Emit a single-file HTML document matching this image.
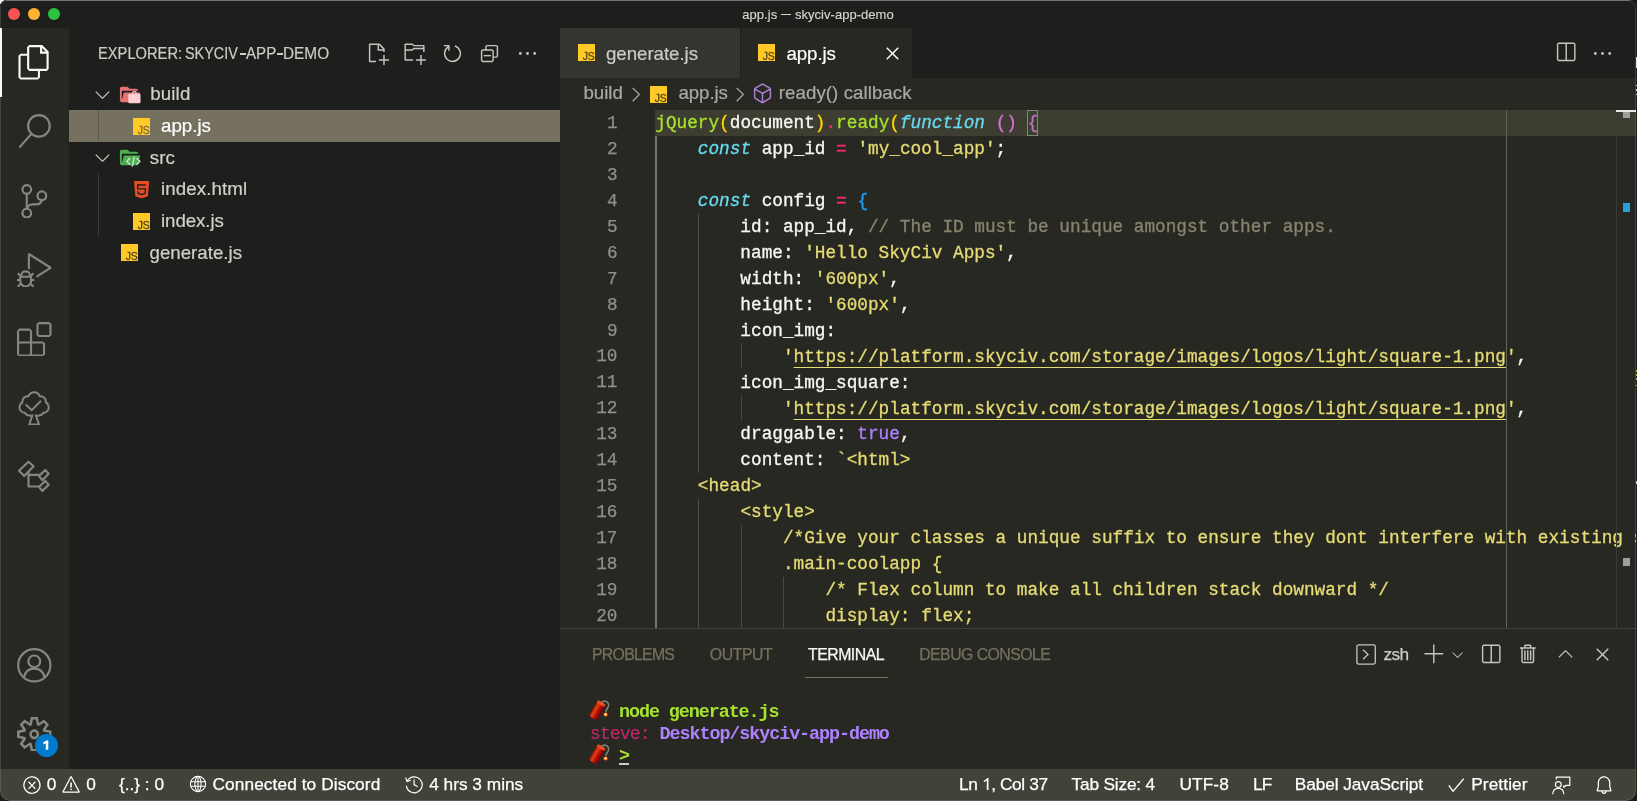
<!DOCTYPE html>
<html>
<head>
<meta charset="utf-8">
<title>app.js — skyciv-app-demo</title>
<style>
*{box-sizing:border-box;margin:0;padding:0}
html,body{width:1637px;height:801px;overflow:hidden;background:#1b1b1a}
body{font-family:"Liberation Sans",sans-serif;color:#ccc;position:relative}
.abs{position:absolute}
#win{will-change:transform;position:absolute;left:0;top:0;width:1636px;height:801px;overflow:hidden;background:#1e1f1c;border-radius:7px 8px 10px 10px}
/* title bar */
#titlebar{left:0;top:0;width:1637px;height:28px;background:#1e1f1c}
#topline{left:0;top:0;width:1637px;height:1px;background:#5c5c5a}
.tl{position:absolute;top:8px;width:12px;height:12px;border-radius:50%}
#title{left:0;width:1636px;top:7px;text-align:center;font-size:13px;color:#d4d4d0;line-height:15px;letter-spacing:.04px;-webkit-text-stroke:.15px}
/* activity bar */
#act{left:0;top:28px;width:69px;height:742px;background:#272822}
#actind{left:0;top:28px;width:2px;height:69px;background:#f8f8f2}
/* sidebar */
#side{left:69px;top:28px;width:491px;height:742px;background:#1e1f1c}
.row{position:absolute;left:69px;width:491px;height:31.7px}
.lbl{position:absolute;font-size:18.720px;line-height:22px;color:#d0d0cc;white-space:pre;-webkit-text-stroke:.2px}
.jsi{width:17.300px;height:17.300px;background:#ffca28;overflow:hidden}
.jsi span{position:absolute;right:.7px;bottom:-.4px;font-size:10.400px;line-height:11px;font-weight:normal;color:#55440f;-webkit-text-stroke:.3px #55440f;letter-spacing:-.15px;font-family:"Liberation Sans",sans-serif}
/* editor */
#tabs{left:560px;top:28px;width:1077px;height:50.400px;background:#1e1f1c}
#tab1{left:560px;top:28px;width:180px;height:50.4px;background:#34352f}
#tab2{left:741.200px;top:28px;width:171px;height:50.4px;background:#272822}
#crumbs{left:560px;top:78.4px;width:1077px;height:31.7px;background:#272822}
#editor{left:560px;top:110.100px;width:1077px;height:517.900px;background:#272822;overflow:hidden}
#curline{left:95px;top:0;width:982px;height:25.9px;background:#3e3d32}
.ln{position:absolute;left:0;width:57.500px;text-align:right;font-family:"Liberation Mono",monospace;font-size:17.720px;line-height:25.920px;height:25.920px;color:#90908a;white-space:pre;padding-top:1.100px;-webkit-text-stroke:.25px}
.cl{position:absolute;left:95.300px;font-family:"Liberation Mono",monospace;font-size:17.724px;line-height:25.920px;height:25.920px;color:#f8f8f2;white-space:pre;padding-top:1.300px;-webkit-text-stroke:.3px}
.g{color:#a6e22e}.y{color:#e6db74}.b{color:#66d9ef;font-style:italic}.p{color:#f92672}.c{color:#88846f}.v{color:#ae81ff}
.b1{color:#ffd700}.b2{color:#da70d6}.b3{color:#179fff}
.u{text-decoration:underline;text-decoration-thickness:1.400px;text-underline-offset:5.200px;text-decoration-skip-ink:none}
.ig{position:absolute;width:1.300px;background:#464741}
/* panel */
#panel{left:560px;top:628px;width:1077px;height:142px;background:#272822;border-top:1px solid #414339}
.pt{position:absolute;font-size:15.840px;line-height:20px;color:#75715e;white-space:pre;top:16px;-webkit-text-stroke:.25px}
.term{position:absolute;font-family:"Liberation Mono",monospace;font-size:18.400px;letter-spacing:-1.070px;line-height:22px;white-space:pre;font-weight:bold}
/* status */
#status{left:0;top:769.3px;width:1637px;height:31.7px;background:#414339}
.st{position:absolute;top:773.400px;font-size:17.280px;line-height:22px;color:#fff;white-space:pre;-webkit-text-stroke:.25px #fff}
</style>
</head>
<body>
<div class="abs" style="left:0;top:0;width:4px;height:4px;background:#f0f0f0"></div>
<!--EDGE--><div class="abs" style="left:1636px;top:57px;width:1px;height:11px;background:#dcdcdc"></div><div class="abs" style="left:1636px;top:85px;width:1px;height:1.400px;background:#cfcfcf"></div><div class="abs" style="left:1636px;top:89.200px;width:1px;height:1.500px;background:#cfcfcf"></div><div class="abs" style="left:1636px;top:93.600px;width:1px;height:1.400px;background:#cfcfcf"></div><div class="abs" style="left:1636px;top:370px;width:1px;height:2px;background:#b5a644"></div><div class="abs" style="left:1636px;top:374px;width:1px;height:2px;background:#b5a644"></div><div class="abs" style="left:1636px;top:378px;width:1px;height:1.500px;background:#b5a644"></div><div class="abs" style="left:1636px;top:385px;width:1px;height:1px;background:#b5a644"></div><div class="abs" style="left:1636px;top:481px;width:1px;height:3px;background:#cfcfcf"></div><!--/EDGE-->
<div id="win">
<!-- TITLE BAR -->
<div id="titlebar" class="abs"></div>
<div id="topline" class="abs"></div>
<div class="tl" style="left:8px;background:#fd5252"></div>
<div class="tl" style="left:28px;background:#fdb232"></div>
<div class="tl" style="left:48px;background:#2bc440"></div>
<div id="title" class="abs">app.js <span style="display:inline-block;width:10.400px;height:1.200px;background:#d4d4d0;vertical-align:middle;margin:0 0 1.500px 0"></span> skyciv-app-demo</div>

<!-- ACTIVITY BAR -->
<div id="act" class="abs"></div>
<div id="actind" class="abs"></div>
<!--ACT-ICONS-->
<svg class="abs" style="left:17.2px;top:45.3px" width="34.56" height="34.56" viewBox="0 0 24 24" fill="#f8f8f2"><path d="M17.5 0h-9L7 1.5V6H2.5L1 7.5v15.07L2.5 24h12.07L16 22.57V18h4.7l1.3-1.43V4.5L17.5 0zm0 2.12l2.38 2.38H17.5V2.12zm-3 20.38h-12v-15H7v9.07L8.5 18h6v4.5zm6-6h-12v-15H16V6h4.5v10.5z"/></svg>
<svg class="abs" style="left:17.2px;top:114.4px" width="34.56" height="34.56" viewBox="0 0 24 24" fill="#85867f"><path d="M15.25 0a8.25 8.25 0 0 0-6.18 13.72L1 22.88l1.12 1 8.05-9.12A8.251 8.251 0 1 0 15.25.01V0zm0 15a6.75 6.75 0 1 1 0-13.5 6.75 6.75 0 0 1 0 13.5z"/></svg>
<svg class="abs" style="left:17.2px;top:183.5px" width="34.56" height="34.56" viewBox="0 0 24 24" fill="#85867f"><path d="M21.007 8.222A3.738 3.738 0 0 0 15.045 5.2a3.737 3.737 0 0 0 1.156 6.583 2.988 2.988 0 0 1-2.668 1.67h-2.99a4.456 4.456 0 0 0-2.989 1.165V7.4a3.737 3.737 0 1 0-1.494 0v9.117a3.776 3.776 0 1 0 1.816.099 2.99 2.99 0 0 1 2.668-1.667h2.99a4.484 4.484 0 0 0 4.223-3.039 3.736 3.736 0 0 0 3.25-3.687zM4.565 3.738a2.242 2.242 0 1 1 4.484 0 2.242 2.242 0 0 1-4.484 0zm4.484 16.441a2.242 2.242 0 1 1-4.484 0 2.242 2.242 0 0 1 4.484 0zm8.221-9.715a2.242 2.242 0 1 1 0-4.485 2.242 2.242 0 0 1 0 4.485z"/></svg>
<svg class="abs" style="left:17.2px;top:252.6px" width="34.56" height="34.56" viewBox="0 0 24 24" fill="#85867f"><path d="M10.94 13.5l-1.32 1.32a3.73 3.73 0 0 0-7.24 0L1.06 13.5 0 14.56l1.72 1.72-.22.22V18H0v1.5h1.5v.08c.077.489.214.966.41 1.42L0 22.94 1.06 24l1.65-1.65A4.308 4.308 0 0 0 6 24a4.31 4.31 0 0 0 3.29-1.65L10.94 24 12 22.94 10.09 21c.198-.464.336-.951.41-1.45v-.1H12V18h-1.5v-1.5l-.22-.22L12 14.56l-1.06-1.06zM6 13.5a2.25 2.25 0 0 1 2.25 2.25h-4.5A2.25 2.25 0 0 1 6 13.5zm3 6a3.33 3.33 0 0 1-3 3 3.33 3.33 0 0 1-3-3v-2.25h6v2.25zm14.76-9.9v1.26L13.5 17.37V15.6l8.5-5.37L9 2v9.46a5.07 5.07 0 0 0-1.5-.72V.63L8.64 0l15.12 9.6z"/></svg>
<svg class="abs" style="left:17.2px;top:321.7px" width="34.56" height="34.56" viewBox="0 0 24 24" fill="#85867f"><path d="M13.5 1.5L15 0h7.5L24 1.5V9l-1.5 1.5H15L13.5 9V1.5zm1.5 0V9h7.5V1.5H15zM0 15V6l1.5-1.5H9L10.5 6v7.5H18l1.5 1.5v7.5L18 24H1.5L0 22.5V15zm9-1.5V6H1.5v7.5H9zM9 15H1.5v7.5H9V15zm1.5 7.5H18V15h-7.5v7.5z"/></svg>
<!-- tree icon -->
<svg class="abs" style="left:17.200px;top:390.800px" width="34.560" height="34.560" viewBox="0 0 24 24" fill="none" stroke="#85867f" stroke-width="1.400" stroke-linejoin="round" stroke-linecap="round"><path d="M13.100 16.900C15 17.600 17.500 16.600 18.300 15.200 21 15 22.600 12.600 21.900 10.400 21.600 9 20.800 8.200 20 7.800 20.300 5.200 18.300 3.400 15.900 3.700 15.200 1.900 13.600.8 11.900.8 10.200.8 8.600 1.900 7.900 3.700 5.500 3.400 3.500 5.200 3.800 7.800 3 8.200 2.200 9 1.900 10.400 1.200 12.600 2.800 15 5.500 15.200 6.300 16.600 8.800 17.600 10.700 16.900L8.500 23.300H15.300Z"/><path d="M6.400 9.700l3.900 3.600 6-6.200"/></svg>
<!-- graph icon -->
<svg class="abs" style="left:17.200px;top:459.900px" width="34.560" height="34.560" viewBox="0 0 24 24" fill="none" stroke="#85867f" stroke-width="1.500" stroke-linejoin="round"><path d="M8 1.250l3.530 3.130-6.460 6.800L1.400 7.500z"/><path d="M19.650 7l2.360 2.580-4.440 4.450-2.290-2.850z"/><path d="M19.650 14.500l2.360 2.600-4.440 4.400-2.290-2.800z"/><path d="M8 8.500v9.900h8M8 10.350h8"/></svg>
<!-- account -->
<svg class="abs" style="left:17.2px;top:648.300px" width="34.56" height="34.56" viewBox="0 0 24 24" fill="none" stroke="#85867f" stroke-width="1.5"><circle cx="12" cy="12" r="11.200"/><circle cx="12" cy="9.300" r="4.100"/><path d="M4.800 20.300c.9-3.800 3.700-6 7.200-6s6.300 2.200 7.200 6"/></svg>
<!-- gear -->
<svg class="abs" style="left:17.200px;top:716.800px" width="34.56" height="34.56" viewBox="0 0 24 24" fill="#85867f"><path fill-rule="evenodd" d="M19.850 8.750l4.150.83v4.840l-4.150.83 2.350 3.520-3.430 3.430-3.520-2.350-.83 4.150H9.580l-.83-4.150-3.520 2.350-3.430-3.430 2.350-3.520L0 14.420V9.580l4.150-.83L1.800 5.230 5.230 1.800l3.520 2.350L9.580 0h4.840l.83 4.150 3.520-2.350 3.430 3.430-2.350 3.520zm-1.570 5.070l4-.81v-2l-4-.81-.54-1.300 2.290-3.430-1.430-1.430-3.430 2.290-1.300-.54-.81-4h-2l-.81 4-1.300.54-3.430-2.290-1.430 1.430L6.380 8.900l-.54 1.300-4 .81v2l4 .81.54 1.300-2.290 3.430 1.430 1.430 3.430-2.290 1.300.54.81 4h2l.81-4 1.300-.54 3.430 2.290 1.430-1.430-2.290-3.430.54-1.300zm-8.186-4.672A3.430 3.430 0 0 1 12 8.570 3.440 3.440 0 0 1 15.430 12a3.430 3.430 0 1 1-5.336-2.852zm.956 4.274c.281.188.612.288.95.288A1.700 1.700 0 0 0 13.710 12a1.710 1.710 0 1 0-2.660 1.422z"/></svg>
<div class="abs" style="left:35px;top:734px;width:23px;height:23px;border-radius:50%;background:#007acc"></div><svg class="abs" style="left:35px;top:734px" width="23" height="23" viewBox="0 0 23 23"><path fill="#fff" d="M13.300 6.400V15.800H10.800V9.200L8.700 10.400 8.100 8.500 11.300 6.400Z"/></svg>
<!--/ACT-ICONS-->

<!-- SIDEBAR -->
<div id="side" class="abs"></div>
<!--SIDE-->
<div style="position:absolute;top:44px;font-size:15.840px;line-height:20px;color:#cbcbc7;white-space:pre;transform-origin:0 0;-webkit-text-stroke:.2px #cbcbc7;left:97.500px;transform:scaleX(.928)">EXPLORER:</div><div style="position:absolute;top:44px;font-size:15.840px;line-height:20px;color:#cbcbc7;white-space:pre;transform-origin:0 0;-webkit-text-stroke:.2px #cbcbc7;left:185px;transform:scaleX(.91)">SKYCIV</div><div style="position:absolute;top:44px;font-size:15.840px;line-height:20px;color:#cbcbc7;white-space:pre;transform-origin:0 0;-webkit-text-stroke:.2px #cbcbc7;left:246.100px;transform:scaleX(.955)">APP</div><div style="position:absolute;top:44px;font-size:15.840px;line-height:20px;color:#cbcbc7;white-space:pre;transform-origin:0 0;-webkit-text-stroke:.2px #cbcbc7;left:282.800px;transform:scaleX(.972)">DEMO</div><div class="abs" style="left:240.200px;top:53.400px;width:5.600px;height:1.400px;background:#cbcbc7"></div><div class="abs" style="left:277px;top:53.400px;width:5.700px;height:1.400px;background:#cbcbc7"></div>
<!-- header actions -->
<svg class="abs" style="left:366px;top:41.700px" width="23" height="23" viewBox="0 0 16 16" fill="#c5c5c2"><path d="M9.500 1.100l3.400 3.500.1.400v2h-1V6H8V2H3v11h4v1H2.500l-.5-.5v-12l.5-.5h6.700l.3.100zM9 2v3h2.900L9 2zm4 14h-1v-3H9v-1h3V9h1v3h3v1h-3v3z"/></svg>
<svg class="abs" style="left:403px;top:41.700px" width="23" height="23" viewBox="0 0 16 16" fill="#c5c5c2"><path d="M14.500 2H7.710l-.85-.85L6.510 1h-5l-.5.500v11l.5.500H7v-1H1.990V6h4.490l.35-.15.860-.86H14v1.500l-.001.510h1.011V2.500L14.500 2zm-.51 2h-6.500l-.35.150-.86.860H2v-3h4.290l.85.850.36.150H14l-.01.990zM13 16h-1v-3H9v-1h3V9h1v3h3v1h-3v3z"/></svg>
<svg class="abs" style="left:440.500px;top:41.700px" width="23" height="23" viewBox="0 0 16 16" fill="#c5c5c2"><path d="M4.681 3H2V2h3.500l.5.500V6H5V4a5 5 0 1 0 4.530-.761l.302-.954A6 6 0 1 1 4.681 3z"/></svg>
<svg class="abs" style="left:478px;top:41.700px" width="23" height="23" viewBox="0 0 16 16" fill="#c5c5c2"><path d="M9 9H4v1h5V9z"/><path fill-rule="evenodd" d="M5 3l1-1h7l1 1v7l-1 1h-2v2l-1 1H3l-1-1V6l1-1h2V3zm1 2h4l1 1v4h2V3H6v2zm4 1H3v7h7V6z"/></svg>
<svg class="abs" style="left:515.500px;top:41.700px" width="23" height="23" viewBox="0 0 16 16" fill="#c5c5c2"><path d="M4 8a1 1 0 1 1-2 0 1 1 0 0 1 2 0zm5 0a1 1 0 1 1-2 0 1 1 0 0 1 2 0zm5 0a1 1 0 1 1-2 0 1 1 0 0 1 2 0z"/></svg>

<!-- selected row -->
<div class="abs" style="left:69px;top:110.100px;width:491px;height:31.700px;background:#75715e"></div>
<!-- tree indent guides -->
<div class="abs" style="left:98px;top:110.100px;width:1px;height:31.700px;background:#5a594f"></div>
<div class="abs" style="left:98px;top:173.500px;width:1px;height:63.400px;background:#3a3a38"></div>

<!-- build -->
<svg class="abs" style="left:90.500px;top:82.700px" width="23" height="23" viewBox="0 0 16 16" fill="#c5c5c2"><path d="M7.976 10.072l4.357-4.357.62.618L8.284 11h-.618L3 6.333l.619-.618 4.357 4.357z"/></svg>
<svg class="abs" style="left:117.800px;top:83px" width="23" height="23" viewBox="0 0 24 24"><path fill="#e57373" d="M19 20H4c-1.110 0-2-.9-2-2V6c0-1.110.89-2 2-2h6l2 2h7a2 2 0 0 1 2 2H4v10l2.140-8h17.070l-2.280 8.500c-.23.870-1.010 1.500-1.930 1.500z"/><path fill="#ffcdd2" fill-rule="evenodd" d="M11.600 11.200h2.900c0-1.700 1-2.900 2.600-2.900s2.600 1.200 2.600 2.900h2.900c.5 0 .9.400.9.900v8c0 .5-.4.900-.9.900H11.600c-.5 0-.9-.4-.9-.9v-8c0-.5.4-.9.9-.9zm4.200 0h2.600c0-1-.5-1.600-1.300-1.600s-1.300.6-1.300 1.600z"/></svg>
<div class="lbl" style="left:150.300px;top:83px;letter-spacing:.12px">build</div>

<!-- app.js -->
<div class="abs jsi" style="left:133px;top:118px"><span style="color:#7a6a3a;-webkit-text-stroke-color:#7a6a3a">JS</span></div>
<div class="lbl" style="left:161px;top:114.700px;color:#fff">app.js</div>

<!-- src -->
<svg class="abs" style="left:90.500px;top:146.100px" width="23" height="23" viewBox="0 0 16 16" fill="#c5c5c2"><path d="M7.976 10.072l4.357-4.357.62.618L8.284 11h-.618L3 6.333l.619-.618 4.357 4.357z"/></svg>
<svg class="abs" style="left:117.800px;top:146.400px" width="23" height="23" viewBox="0 0 24 24"><path fill="#4caf50" d="M19 20H4c-1.110 0-2-.9-2-2V6c0-1.110.89-2 2-2h6l2 2h7a2 2 0 0 1 2 2H4v10l2.140-8h17.070l-2.280 8.500c-.23.870-1.010 1.500-1.930 1.500z"/><path fill="none" stroke="#c8e6c9" stroke-width="1.500" d="M12.600 12.400l-3.400 3.600 3.400 3.600M19.400 12.400l3.400 3.600-3.400 3.600M17.200 11l-2.400 10.500"/></svg>
<div class="lbl" style="left:149.700px;top:147.200px;letter-spacing:.12px">src</div>

<!-- index.html -->
<svg class="abs" style="left:134px;top:180.900px" width="15.200" height="17.400" viewBox="0 0 15.200 17.400"><path fill="#e44d26" d="M0 0H15.200L13.900 15.300 7.600 17.400 1.300 15.300z"/><path fill="none" stroke="#1f1f1e" stroke-width="1.350" d="M11.900 4H3.700V7.900H11.600L11.100 12.400 7.600 13.500 4.200 12.400 4 10.300"/></svg>
<div class="lbl" style="left:161px;top:178.100px;letter-spacing:.09px">index.html</div>

<!-- index.js -->
<div class="abs jsi" style="left:133px;top:212.900px"><span>JS</span></div>
<div class="lbl" style="left:161px;top:209.800px;letter-spacing:-.08px">index.js</div>

<!-- generate.js -->
<div class="abs jsi" style="left:121px;top:243.900px"><span>JS</span></div>
<div class="lbl" style="left:149.500px;top:241.500px">generate.js</div>
<!--/SIDE-->

<!-- EDITOR -->
<div id="tabs" class="abs"></div>
<div id="tab1" class="abs"></div>
<div id="tab2" class="abs"></div>
<!--TABS-->
<div class="abs jsi" style="left:578px;top:44px"><span>JS</span></div>
<div class="lbl" style="left:606px;top:42.800px;color:#ccccc7;letter-spacing:-.05px">generate.js</div>
<div class="abs jsi" style="left:758px;top:44px"><span>JS</span></div>
<div class="lbl" style="left:786.500px;top:42.800px;color:#fff;letter-spacing:-.1px">app.js</div>
<svg class="abs" style="left:880.500px;top:42.200px" width="23" height="23" viewBox="0 0 16 16" fill="#fff"><path d="M8 8.707l3.646 3.647.708-.707L8.707 8l3.647-3.646-.707-.708L8 7.293 4.354 3.646l-.707.708L7.293 8l-3.646 3.646.707.708L8 8.707z"/></svg>
<!-- editor actions -->
<svg class="abs" style="left:1553.500px;top:41.200px" width="23" height="23" viewBox="0 0 16 16" fill="#c5c5c2"><path d="M14 1H3L2 2v11l1 1h11l1-1V2l-1-1zM8 13H3V2h5v11zm6 0H9V2h5v11z"/></svg>
<svg class="abs" style="left:1591px;top:41.700px" width="23" height="23" viewBox="0 0 16 16" fill="#c5c5c2"><path d="M4 8a1 1 0 1 1-2 0 1 1 0 0 1 2 0zm5 0a1 1 0 1 1-2 0 1 1 0 0 1 2 0zm5 0a1 1 0 1 1-2 0 1 1 0 0 1 2 0z"/></svg>
<!--/TABS-->
<div id="crumbs" class="abs"></div>
<!--CRUMBS-->
<div class="lbl" style="left:583.500px;top:82px;color:#a9a9a6;-webkit-text-stroke:.2px;letter-spacing:-.05px">build</div>
<svg class="abs" style="left:624.200px;top:83.200px" width="23" height="23" viewBox="0 0 16 16" fill="#a9a9a6"><path d="M10.072 8.024L5.715 3.667l.618-.62L11 7.716v.618L6.333 13l-.618-.619 4.357-4.357z"/></svg>
<div class="abs jsi" style="left:650px;top:86px"><span>JS</span></div>
<div class="lbl" style="left:678.500px;top:82px;color:#a9a9a6;-webkit-text-stroke:.2px;letter-spacing:-.1px">app.js</div>
<svg class="abs" style="left:728.400px;top:83.200px" width="23" height="23" viewBox="0 0 16 16" fill="#a9a9a6"><path d="M10.072 8.024L5.715 3.667l.618-.62L11 7.716v.618L6.333 13l-.618-.619 4.357-4.357z"/></svg>
<svg class="abs" style="left:751.300px;top:81.500px" width="23" height="23" viewBox="0 0 16 16" fill="#b180d7"><path d="M13.510 4l-5-3h-1l-5 3-.49.860v6l.49.850 5 3h1l5-3 .49-.85v-6L13.510 4zm-6 9.560l-4.500-2.700V5.700l4.500 2.450v5.410zM3.270 4.700l4.740-2.840 4.740 2.840-4.740 2.590L3.270 4.700zm9.740 6.160l-4.500 2.700V8.150l4.500-2.450v5.160z"/></svg>
<div class="lbl" style="left:778.800px;top:82px;color:#a9a9a6;-webkit-text-stroke:.2px;letter-spacing:.05px">ready() callback</div>
<!--/CRUMBS-->
<div id="editor" class="abs">
<div id="curline" class="abs"></div>
<!--CODE-->
<div class="ln" style="top:0.00px">1</div><div class="cl" style="top:0.00px"><span class="g">jQuery</span><span class="b1">(</span>document<span class="b1">)</span><span class="p">.</span><span class="g">ready</span><span class="b1">(</span><span class="b">function</span> <span class="b2">()</span> <span class="b2 brk">{</span></div>
<div class="ln" style="top:25.92px">2</div><div class="cl" style="top:25.92px">    <span class="b">const</span> app_id <span class="p">=</span> <span class="y">'my_cool_app'</span>;</div>
<div class="ln" style="top:51.84px">3</div><div class="cl" style="top:51.84px"></div>
<div class="ln" style="top:77.76px">4</div><div class="cl" style="top:77.76px">    <span class="b">const</span> config <span class="p">=</span> <span class="b3">{</span></div>
<div class="ln" style="top:103.68px">5</div><div class="cl" style="top:103.68px">        id: app_id, <span class="c">// The ID must be unique amongst other apps.</span></div>
<div class="ln" style="top:129.60px">6</div><div class="cl" style="top:129.60px">        name: <span class="y">'Hello SkyCiv Apps'</span>,</div>
<div class="ln" style="top:155.52px">7</div><div class="cl" style="top:155.52px">        width: <span class="y">'600px'</span>,</div>
<div class="ln" style="top:181.44px">8</div><div class="cl" style="top:181.44px">        height: <span class="y">'600px'</span>,</div>
<div class="ln" style="top:207.36px">9</div><div class="cl" style="top:207.36px">        icon_img:</div>
<div class="ln" style="top:233.28px">10</div><div class="cl" style="top:233.28px">            <span class="y">'<span class="u">https://platform.skyciv.com/storage/images/logos/light/square-1.png</span>'</span>,</div>
<div class="ln" style="top:259.20px">11</div><div class="cl" style="top:259.20px">        icon_img_square:</div>
<div class="ln" style="top:285.12px">12</div><div class="cl" style="top:285.12px">            <span class="y">'<span class="u">https://platform.skyciv.com/storage/images/logos/light/square-1.png</span>'</span>,</div>
<div class="ln" style="top:311.04px">13</div><div class="cl" style="top:311.04px">        draggable: <span class="v">true</span>,</div>
<div class="ln" style="top:336.96px">14</div><div class="cl" style="top:336.96px">        content: <span class="y">`&lt;html&gt;</span></div>
<div class="ln" style="top:362.88px">15</div><div class="cl" style="top:362.88px">    <span class="y">&lt;head&gt;</span></div>
<div class="ln" style="top:388.80px">16</div><div class="cl" style="top:388.80px">        <span class="y">&lt;style&gt;</span></div>
<div class="ln" style="top:414.72px">17</div><div class="cl" style="top:414.72px">            <span class="y">/*Give your classes a unique suffix to ensure they dont interfere with existing styles */</span></div>
<div class="ln" style="top:440.64px">18</div><div class="cl" style="top:440.64px">            <span class="y">.main-coolapp {</span></div>
<div class="ln" style="top:466.56px">19</div><div class="cl" style="top:466.56px">                <span class="y">/* Flex column to make all children stack downward */</span></div>
<div class="ln" style="top:492.48px">20</div><div class="cl" style="top:492.48px">                <span class="y">display: flex;</span></div>
<div class="ig" style="left:95.4px;top:25.92px;height:492.48px;background:#73746e"></div>
<div class="ig" style="left:137.9px;top:103.68px;height:259.20px;background:#4d4e48"></div>
<div class="ig" style="left:137.9px;top:388.80px;height:129.60px;background:#4d4e48"></div>
<div class="ig" style="left:180.5px;top:233.28px;height:25.92px;background:#474842"></div>
<div class="ig" style="left:180.5px;top:285.12px;height:25.92px;background:#474842"></div>
<div class="ig" style="left:180.5px;top:414.72px;height:103.68px;background:#474842"></div>
<div class="ig" style="left:223.0px;top:466.56px;height:51.84px;background:#474842"></div>
<div class="abs" style="left:467.400px;top:0;width:10.800px;height:25.900px;border:1px solid #85857c;background:rgba(0,100,0,.1)"></div>
<div class="abs" style="left:946px;top:0;width:1.200px;height:519px;background:#62625d"></div>
<div class="abs" style="left:1056px;top:0;width:1px;height:519px;background:#3a3b35"></div>
<div class="abs" style="left:1056px;top:0;width:21px;height:2px;background:#e8e8e4"></div>
<div class="abs" style="left:1063px;top:2px;width:7px;height:6px;background:#a0a09c"></div>
<div class="abs" style="left:1063px;top:93px;width:7px;height:8.500px;background:#2a9fd6"></div>
<div class="abs" style="left:1063px;top:447.700px;width:7px;height:8.300px;background:#a0a09e"></div>
<!--/CODE-->
</div>

<!-- PANEL -->
<div id="panel" class="abs"></div>
<!--PANEL-->
<div class="pt" style="left:592px;top:644.500px;letter-spacing:-.72px">PROBLEMS</div>
<div class="pt" style="left:709.800px;top:644.500px;letter-spacing:-.43px">OUTPUT</div>
<div class="pt" style="left:808px;top:644.500px;letter-spacing:-.5px;color:#f8f8f2">TERMINAL</div>
<div class="pt" style="left:919.200px;top:644.500px;letter-spacing:-.53px">DEBUG CONSOLE</div>
<div class="abs" style="left:805.300px;top:676.700px;width:83.200px;height:1px;background:#75715e"></div>
<!-- panel actions -->
<svg class="abs" style="left:1355.500px;top:644.300px" width="21" height="21" viewBox="0 0 21 21" fill="none" stroke="#c5c5c2" stroke-width="1.300"><rect x="0.900" y="0.900" width="18.400" height="19.200" rx="1.800"/><path d="M7 5.700l5 4.800-5 4.800" stroke-linejoin="miter"/></svg>
<div class="abs" style="left:1383.500px;top:643.300px;font-size:17.280px;line-height:22px;color:#ccccc8;letter-spacing:-.6px;white-space:pre;-webkit-text-stroke:.25px">zsh</div>
<svg class="abs" style="left:1423.100px;top:643.200px" width="23" height="23" viewBox="0 0 16 16" fill="#c5c5c2"><path d="M14 7v1H8v6H7V8H1V7h6V1h1v6h6z"/></svg>
<svg class="abs" style="left:1448.800px;top:646px" width="17.250" height="17.250" viewBox="0 0 16 16" fill="#c5c5c2"><path d="M7.976 10.072l4.357-4.357.62.618L8.284 11h-.618L3 6.333l.619-.618 4.357 4.357z"/></svg>
<svg class="abs" style="left:1479.200px;top:642.900px" width="23" height="23" viewBox="0 0 16 16" fill="#c5c5c2"><path d="M14 1H3L2 2v11l1 1h11l1-1V2l-1-1zM8 13H3V2h5v11zm6 0H9V2h5v11z"/></svg>
<svg class="abs" style="left:1516.500px;top:643.300px" width="23" height="23" viewBox="0 0 16 16" fill="#c5c5c2"><path fill-rule="evenodd" d="M10 3h3v1h-1v9l-1 1H4l-1-1V4H2V3h3V2a1 1 0 0 1 1-1h3a1 1 0 0 1 1 1v1zM9 2H6v1h3V2zM4 13h7V4H4v9zm2-8H5v7h1V5zm1 0h1v7H7V5zm2 0h1v7H9V5z"/></svg>
<svg class="abs" style="left:1553.650px;top:642.800px" width="23" height="23" viewBox="0 0 16 16" fill="#c5c5c2"><path d="M8.024 5.928l-4.357 4.357-.62-.618L7.716 5h.618L13 9.667l-.619.618-4.357-4.357z"/></svg>
<svg class="abs" style="left:1591.350px;top:643.200px" width="23" height="23" viewBox="0 0 16 16" fill="#c5c5c2"><path d="M8 8.707l3.646 3.647.708-.707L8.707 8l3.647-3.646-.707-.708L8 7.293 4.354 3.646l-.707.708L7.293 8l-3.646 3.646.707.708L8 8.707z"/></svg>
<!-- terminal -->
<svg class="abs fc" style="left:585px;top:697px" width="28" height="26" viewBox="0 0 28 26"><g transform="translate(12.250 13.150) rotate(30)"><rect x="-4.650" y="-7.700" width="9.300" height="15.400" fill="url(#fcg)"/><ellipse cx="0" cy="7.700" rx="4.650" ry="1.600" fill="url(#fcg)"/><ellipse cx="0" cy="-7.700" rx="4.650" ry="1.700" fill="#ee4a17"/></g><path d="M16.100 6.500C17 4.500 19 3.800 20.500 4.200 23.500 5 24.300 8 23.200 10 22.200 11.800 21.200 13 20.800 14.600" fill="none" stroke="#80867b" stroke-width="1.500" stroke-linecap="round"/><g transform="translate(20.600 17.400) scale(.88)"><path d="M0-4.200L1-1.300 3.900-2.300 1.700 0 3.900 2.300 1 1.300 0 4.200-1 1.300-3.900 2.300-1.700 0-3.900-2.300-1-1.300z" fill="#c8220c"/><circle r="2.300" fill="url(#fcs)"/></g></svg>
<div class="term" style="left:619px;top:701.600px;color:#a6e22e">node generate.js</div>
<div class="term" style="left:589.800px;top:723.600px;color:#c7266e;font-weight:normal">steve:</div>
<div class="term" style="left:659.600px;top:723.600px;color:#ae81ff">Desktop/skyciv-app-demo</div>
<svg class="abs fc" style="left:585px;top:741px" width="28" height="26" viewBox="0 0 28 26"><g transform="translate(12.250 13.150) rotate(30)"><rect x="-4.650" y="-7.700" width="9.300" height="15.400" fill="url(#fcg)"/><ellipse cx="0" cy="7.700" rx="4.650" ry="1.600" fill="url(#fcg)"/><ellipse cx="0" cy="-7.700" rx="4.650" ry="1.700" fill="#ee4a17"/></g><path d="M16.100 6.500C17 4.500 19 3.800 20.500 4.200 23.500 5 24.300 8 23.200 10 22.200 11.800 21.200 13 20.800 14.600" fill="none" stroke="#80867b" stroke-width="1.500" stroke-linecap="round"/><g transform="translate(20.600 17.400) scale(.88)"><path d="M0-4.200L1-1.300 3.900-2.300 1.700 0 3.900 2.300 1 1.300 0 4.200-1 1.300-3.900 2.300-1.700 0-3.900-2.300-1-1.300z" fill="#c8220c"/><circle r="2.300" fill="url(#fcs)"/></g></svg>
<div class="term" style="left:619px;top:745.600px;color:#a6e22e">&gt;</div>
<div class="abs" style="left:619px;top:763px;width:10px;height:2px;background:#c8c8c4"></div>
<svg width="0" height="0" style="position:absolute"><defs>
<linearGradient id="fcg" x1="0" y1="0" x2="1" y2="0"><stop offset="0" stop-color="#8a1406"/><stop offset=".3" stop-color="#e2430f"/><stop offset=".62" stop-color="#b80e08"/><stop offset="1" stop-color="#76000a"/></linearGradient>
<radialGradient id="fcs"><stop offset="0" stop-color="#fff"/><stop offset=".35" stop-color="#ffe9a8"/><stop offset=".7" stop-color="#f07a1c"/><stop offset="1" stop-color="#d8300f"/></radialGradient>
</defs></svg>
<!--/PANEL-->

<!-- STATUS -->
<div id="status" class="abs"></div>
<!--STATUS-->
<svg class="abs" style="left:22.200px;top:774.700px" width="20.160" height="20.160" viewBox="0 0 16 16" fill="#fff"><path fill-rule="evenodd" d="M8.600 1c1.600.100 3.100.900 4.200 2 1.300 1.400 2 3.100 2 5.100 0 1.600-.6 3.100-1.600 4.400-1 1.200-2.400 2.100-4 2.400-1.600.3-3.200.1-4.600-.7-1.400-.8-2.500-2-3.100-3.500C.9 9.200.8 7.500 1.300 6c.5-1.600 1.400-2.900 2.800-3.800C5.400 1.300 7 .9 8.600 1zm.5 12.900c1.300-.3 2.500-1 3.400-2.100.8-1.100 1.300-2.400 1.200-3.800 0-1.600-.6-3.200-1.700-4.300-1-1-2.200-1.600-3.600-1.700-1.300-.1-2.700.2-3.800 1-1.100.8-1.900 1.900-2.300 3.300-.4 1.300-.4 2.700.2 4 .6 1.300 1.500 2.300 2.700 3 1.200.7 2.600.9 3.900.6zM7.900 7.500L10.300 5l.7.700-2.400 2.500 2.400 2.500-.7.700-2.400-2.500-2.400 2.500-.7-.7 2.400-2.500-2.400-2.500.7-.7 2.400 2.500z"/></svg>
<div class="st" style="left:46.800px">0</div>
<svg class="abs" style="left:61.100px;top:774.850px" width="20.160" height="20.160" viewBox="0 0 16 16" fill="#fff"><path fill-rule="evenodd" d="M7.560 1h.880l6.540 12.260-.44.740H1.440L1 13.260 7.560 1zM8 2.280L2.280 13H13.700L8 2.280zM8.625 12v-1h-1.250v1h1.250zm-1.250-2V6h1.250v4h-1.250z"/></svg>
<div class="st" style="left:86.200px">0</div>
<div class="st" style="left:118.900px">{..} : 0</div>
<svg class="abs" style="left:189.450px;top:775.250px" width="18" height="18" viewBox="0 0 18 18" fill="none" stroke="#fff" stroke-width="1.100"><circle cx="9" cy="9" r="7.600"/><ellipse cx="9" cy="9" rx="3.100" ry="7.600"/><path d="M1.800 6.700h14.400M1.800 11.300h14.400M9 1.400v15.200"/></svg>
<div class="st" style="left:212.500px;letter-spacing:.09px">Connected to Discord</div>
<svg class="abs" style="left:403.700px;top:773.900px" width="20.160" height="20.160" viewBox="0 0 16 16" fill="none" stroke="#fff" stroke-width=".95"><path d="M2.600 5.600A6.300 6.300 0 1 1 1.900 9.400"/><path d="M1.300 2.900l1.100 3.100 3.100-1" stroke-linejoin="miter"/><path d="M8 4.300V8.400l2.800 1.700"/></svg>
<div class="st" style="left:429.200px">4 hrs 3 mins</div>
<div class="st" style="left:959px;letter-spacing:-.37px">Ln <svg style="display:inline-block;vertical-align:baseline;margin-right:-.37px" width="9.610" height="12.400" viewBox="0 0 9.610 12.400"><path fill="#fff" d="M6.500 0V12.400H4.800V2.400C4 3.200 2.900 3.800 1.800 4.200V2.700C3.200 2.100 4.500 1.200 5.300 0Z"/></svg>, Col 37</div>
<div class="st" style="left:1071.600px;letter-spacing:-.18px">Tab Size: 4</div>
<div class="st" style="left:1179.400px;letter-spacing:.11px">UTF-8</div>
<div class="st" style="left:1253px;letter-spacing:-.9px">LF</div>
<div class="st" style="left:1294.800px;letter-spacing:-.08px">Babel JavaScript</div>
<svg class="abs" style="left:1446.300px;top:774.700px" width="20.160" height="20.160" viewBox="0 0 16 16" fill="#fff"><path d="M14.431 3.323l-8.470 10-.79-.036-3.350-4.770.818-.574 2.978 4.240 8.051-9.506.764.646z"/></svg>
<div class="st" style="left:1471.200px;letter-spacing:.1px">Prettier</div>
<svg class="abs" style="left:1551px;top:774.500px" width="21" height="21" viewBox="0 0 21 21" fill="none" stroke="#fff" stroke-width="1.200" stroke-linejoin="round"><path d="M5.300 4.400V2.100h13.500v8.200h-3.600l-2.300 2.100v-2.100"/><circle cx="7.300" cy="9.600" r="2.900"/><path d="M1.600 19.300c.4-3.600 2.600-5.900 5.700-5.900s5.300 2.300 5.700 5.900"/></svg>
<svg class="abs" style="left:1593.900px;top:774.600px" width="20.160" height="20.160" viewBox="0 0 16 16" fill="#fff"><path fill-rule="evenodd" d="M13.377 10.573a7.630 7.630 0 0 1-.383-2.380V6.195a5.115 5.115 0 0 0-1.268-3.446 5.138 5.138 0 0 0-3.242-1.722c-.694-.072-1.400 0-2.070.227-.67.215-1.280.574-1.794 1.053a4.923 4.923 0 0 0-1.208 1.675 5.067 5.067 0 0 0-.431 2.022v2.200a7.610 7.610 0 0 1-.383 2.370L2 12.343l.479.658h3.505c0 .526.215 1.040.586 1.412.370.370.885.586 1.412.586.526 0 1.040-.215 1.411-.586s.587-.886.587-1.412h3.505l.478-.658-.586-1.770zm-4.690 3.147a.997.997 0 0 1-.705.299.997.997 0 0 1-.706-.3.997.997 0 0 1-.3-.705h1.999a.939.939 0 0 1-.287.706zm-5.515-1.710l.371-1.114a8.633 8.633 0 0 0 .443-2.691V6.004c0-.563.120-1.113.347-1.616.227-.514.550-.969.969-1.340.419-.382.910-.670 1.436-.837.538-.180 1.100-.240 1.650-.180a4.147 4.147 0 0 1 2.597 1.400 4.133 4.133 0 0 1 1.004 2.776v2.010c0 .909.144 1.818.443 2.691l.371 1.113h-9.630v-.012z"/></svg>
<!--/STATUS-->
<div id="frame" class="abs" style="left:0;top:0;width:1636px;height:801px;border-radius:7px 8px 10px 10px;box-shadow:inset 0 0 0 1px rgba(255,255,255,.13);pointer-events:none"></div>
</div>
</body>
</html>
